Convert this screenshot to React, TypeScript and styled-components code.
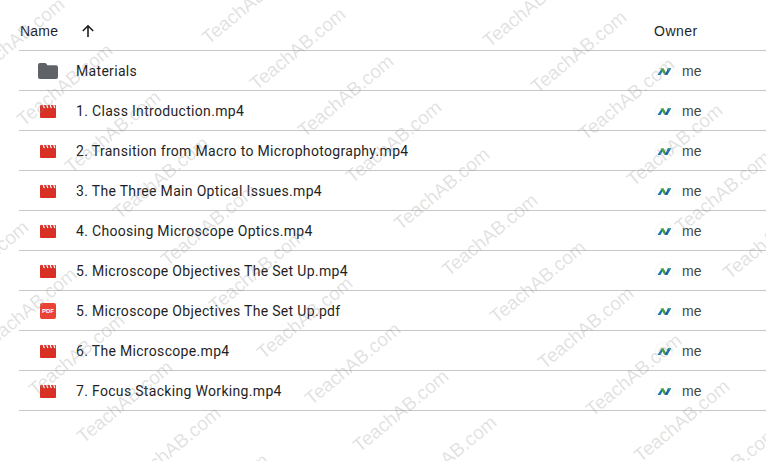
import React from 'react';
import styled, { createGlobalStyle } from 'styled-components';

type FileKind = 'folder' | 'video' | 'pdf';

const files: { name: string; kind: FileKind }[] = [
  { name: 'Materials', kind: 'folder' },
  { name: '1. Class Introduction.mp4', kind: 'video' },
  { name: '2. Transition from Macro to Microphotography.mp4', kind: 'video' },
  { name: '3. The Three Main Optical Issues.mp4', kind: 'video' },
  { name: '4. Choosing Microscope Optics.mp4', kind: 'video' },
  { name: '5. Microscope Objectives The Set Up.mp4', kind: 'video' },
  { name: '5. Microscope Objectives The Set Up.pdf', kind: 'pdf' },
  { name: '6. The Microscope.mp4', kind: 'video' },
  { name: '7. Focus Stacking Working.mp4', kind: 'video' },
];

// each diagonal of the watermark, given by the centre of one stamp on it
const diagonals = [
  { x: 77, y: 355 },
  { x: 65, y: 85 },
  { x: 394, y: 142 },
  { x: 579, y: 52 },
];

const marks: { x: number; y: number }[] = [];
diagonals.forEach((d) => {
  for (let i = -9; i < 10; i++) {
    const x = d.x + i * 48;
    const y = d.y + i * 46.5;
    if (x > -70 && x < 830 && y > -50 && y < 510) marks.push({ x, y });
  }
});

const GlobalStyle = createGlobalStyle`
  html, body {
    margin: 0;
    padding: 0;
    background: #fff;
    overflow: hidden;
  }
`;

const Page = styled.div`
  position: relative;
  width: 766px;
  height: 461px;
  overflow: hidden;
  padding-left: 19px;
  box-sizing: border-box;
  font-family: Roboto, 'Liberation Sans', sans-serif;
  color: #1f1f1f;
`;

const Header = styled.div`
  display: flex;
  align-items: center;
  height: 51px;
  padding-top: 12px;
  box-sizing: border-box;
  border-bottom: 1px solid #c7c7c7;
  font-family: 'Liberation Sans', sans-serif;
  font-size: 14px;
  letter-spacing: 0.2px;
`;

const NameHead = styled.div`
  width: 635px;
  display: flex;
  align-items: center;
  gap: 22px;
  padding-left: 1px;
  box-sizing: border-box;
`;

const OwnerHead = styled.div`
  letter-spacing: 0.5px;
`;

const Row = styled.div`
  display: flex;
  align-items: center;
  height: 40px;
  box-sizing: border-box;
  border-bottom: 1px solid #c7c7c7;
  font-size: 14px;
`;

const NameCell = styled.div`
  width: 636px;
  display: flex;
  align-items: center;
`;

const IconSlot = styled.div`
  width: 57px;
  display: flex;
  justify-content: center;
  padding-left: 1px;
  box-sizing: border-box;
`;

const FileName = styled.span`
  letter-spacing: 0.32px;
  white-space: nowrap;
`;

const OwnerCell = styled.div`
  display: flex;
  align-items: center;
  gap: 7px;
  font-family: 'Liberation Sans', sans-serif;
  color: #444746;
`;

const Watermark = styled.span`
  position: absolute;
  transform: translate(-50%, -50%) rotate(-39.5deg);
  font-family: 'Liberation Sans', sans-serif;
  font-size: 19px;
  color: rgba(150, 150, 150, 0.28);
  white-space: nowrap;
  pointer-events: none;
`;

const FolderIcon = () => (
  <svg width="20" height="16" viewBox="0 0 20 16">
    <path
      d="M2 0h5.5l2 2.2H18a2 2 0 0 1 2 2V14a2 2 0 0 1-2 2H2a2 2 0 0 1-2-2V2a2 2 0 0 1 2-2z"
      fill="#5f6368"
    />
  </svg>
);

const VideoSvg = styled.svg`
  margin-top: 1px;
`;

const VideoIcon = () => (
  <VideoSvg width="16" height="13" viewBox="0 0 16 13">
    <path
      d="M0 1a1 1 0 0 1 1-1h14a1 1 0 0 1 1 1v11a1 1 0 0 1-1 1H1a1 1 0 0 1-1-1z"
      fill="#d93025"
    />
    <path d="M3.2 0 4.4 3M6.7 0 7.9 3M10.2 0 11.4 3M13.7 0 14.9 3" fill="none" stroke="#fff" strokeWidth="1.2" />
  </VideoSvg>
);

const PdfBadge = styled.div`
  width: 16px;
  height: 16px;
  border-radius: 2px;
  background: #ea4335;
  color: #fff;
  font-family: 'Liberation Sans', sans-serif;
  font-size: 6px;
  font-weight: 700;
  line-height: 16px;
  text-align: center;
`;

const OwnerLogo = () => (
  <svg width="20" height="20" viewBox="0 0 20 20">
    <circle cx="9.5" cy="10" r="9" fill="#fff" stroke="#f6f6f6" />
    <path d="M2.5 14 6 8.5h2.6L5.4 14z" fill="#1a73b8" />
    <path d="M5.5 7.2h3L12 13.6H9.2z" fill="#4c9f38" />
    <path d="M9.6 14 13.2 7.2h3L12.4 14z" fill="#1565a8" />
    <path d="M12.6 7.2h3.6l-.9 1.6h-3.5z" fill="#2f9c95" />
  </svg>
);

const icons: Record<FileKind, React.ReactNode> = {
  folder: <FolderIcon />,
  video: <VideoIcon />,
  pdf: <PdfBadge>PDF</PdfBadge>,
};

const App = () => (
  <Page>
    <GlobalStyle />
    <Header>
      <NameHead>
        Name
        <svg width="16" height="16" viewBox="0 0 16 16">
          <path d="M8 14V3.5M2.8 8 8 2.8 13.2 8" fill="none" stroke="#1f1f1f" strokeWidth="1.6" />
        </svg>
      </NameHead>
      <OwnerHead>Owner</OwnerHead>
    </Header>
    {files.map((file) => (
      <Row key={file.name}>
        <NameCell>
          <IconSlot>{icons[file.kind]}</IconSlot>
          <FileName>{file.name}</FileName>
        </NameCell>
        <OwnerCell>
          <OwnerLogo />
          me
        </OwnerCell>
      </Row>
    ))}
    {marks.map((m) => (
      <Watermark key={`${m.x}-${m.y}`} style={{ left: m.x, top: m.y }}>
        TeachAB.com
      </Watermark>
    ))}
  </Page>
);

export default App;
